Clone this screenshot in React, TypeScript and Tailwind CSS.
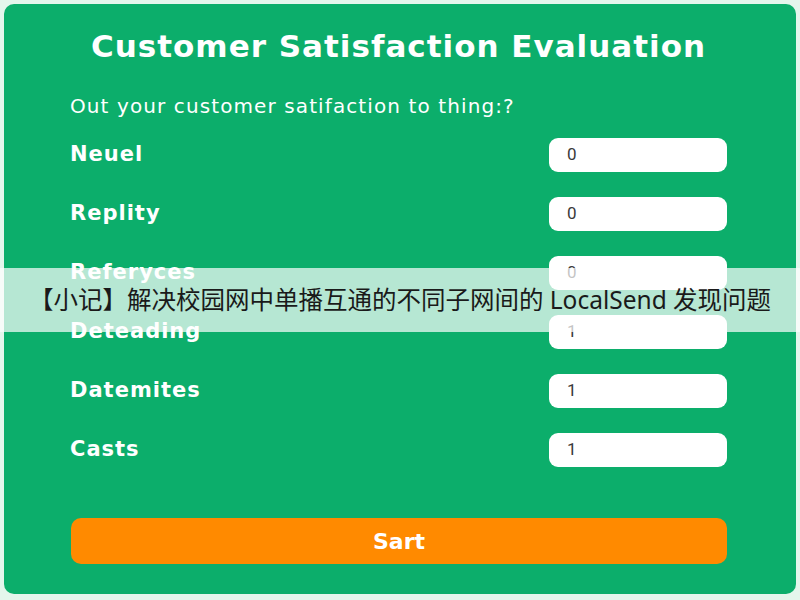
const rows = [
  { label: "Neuel", value: "0" },
  { label: "Replity", value: "0" },
  { label: "Referyces", value: "0" },
  { label: "Deteading", value: "1" },
  { label: "Datemites", value: "1" },
  { label: "Casts", value: "1" },
];

function App() {
  return (
    <div className="relative w-[800px] h-[600px] bg-[#e4f6ec] p-[4px] overflow-hidden">
      <div className="h-[590px] rounded-[10px] bg-[#0cae6b] pl-[66px] pr-[69px] text-white font-['DejaVu_Sans',sans-serif]">
        <h1 className="pt-[24px] text-center text-[31px] leading-[36px] font-bold tracking-[1px]">
          Customer Satisfaction Evaluation
        </h1>
        <p className="mt-[28px] text-[20px] leading-[28px] tracking-[1.1px]">
          Out your customer satifaction to thing:?
        </p>
        <div className="mt-[5px] flex flex-col">
          {rows.map((r) => (
            <div key={r.label} className="h-[59px] flex items-center justify-between">
              <span className="text-[21px] font-bold tracking-[1px]">{r.label}</span>
              <div className="w-[178px] h-[34px] rounded-[9px] bg-white flex items-center pl-[18px] text-[17px] text-[#3a3a3a] font-['Roboto',sans-serif]">
                {r.value}
              </div>
            </div>
          ))}
        </div>
        <button className="mt-[39px] ml-[1px] w-[656px] h-[46px] rounded-[10px] bg-[#ff8a00] text-white text-[22px] font-bold">
          Sart
        </button>
      </div>

      <div className="absolute left-0 right-0 top-[268px] h-[64px] bg-white/70 flex items-center justify-center">
        <span className="text-[24.5px] text-[#1a1a1a] font-['Noto_Sans','Noto_Sans_CJK_SC',sans-serif] whitespace-nowrap">
          【小记】解决校园网中单播互通的不同子网间的 LocalSend 发现问题
        </span>
      </div>
    </div>
  );
}

export default App;
